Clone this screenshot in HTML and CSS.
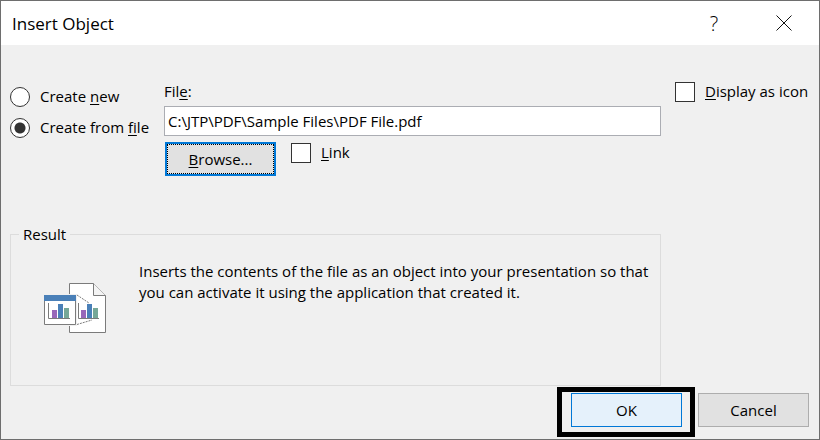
FILE: index.html
```html
<!DOCTYPE html>
<html lang="en">
<head>
  <meta charset="UTF-8">
  <meta name="viewport" content="width=device-width, initial-scale=1.0">
  <title>Insert Object</title>
  <link rel="stylesheet" href="styles.css">
</head>
<body>
  <form class="dialog">
    <header class="title-bar">
      <h1>Insert Object</h1>
      <button type="button" class="title-btn" aria-label="Help">?</button>
      <button type="button" class="title-btn" aria-label="Close">
        <svg width="16" height="16" viewBox="0 0 16 16" fill="none" stroke="#111">
          <path d="M.5 .5l15 15M15.5 .5l-15 15"/>
        </svg>
      </button>
    </header>

    <main class="content">
      <div class="source">
        <label class="option"><input type="radio" name="source"><span>Create <u>n</u>ew</span></label>
        <label class="option"><input type="radio" name="source" checked><span>Create from <u>f</u>ile</span></label>
      </div>

      <div class="file">
        <label for="file-path">Fil<u>e</u>:</label>
        <input type="text" id="file-path" value="C:\JTP\PDF\Sample Files\PDF File.pdf">
        <div class="file-actions">
          <button type="button" class="btn browse"><span><u>B</u>rowse...</span></button>
          <label class="check"><input type="checkbox"><span><u>L</u>ink</span></label>
        </div>
      </div>

      <label class="check"><input type="checkbox"><span><u>D</u>isplay as icon</span></label>

      <fieldset class="result">
        <legend>Result</legend>
        <div class="result-body">
          <svg class="result-icon" width="62" height="50" viewBox="0 0 62 50" aria-hidden="true">
            <!-- document -->
            <path d="M25.5 .5H49.5L61.5 12.5V49.5H25.5z" fill="#fff" stroke="#7b7b7b"/>
            <path d="M49.5 .5V12.5H61.5" fill="#f4f4f4" stroke="#7b7b7b"/>
            <path d="M34.5 20V35.5H55" fill="none" stroke="#7b7b7b"/>
            <path d="M37 27h5v8h-5z" fill="#9868b9"/>
            <path d="M43 21h5v14h-5z" fill="#4a80b8"/>
            <path d="M49 25h5v10h-5z" fill="#76a797"/>
            <path d="M33 12L45 20M33 41.5L48 37" stroke="#7b7b7b" stroke-dasharray="2 1"/>
            <!-- window -->
            <path d="M24 11H33V43H24z" fill="#f0f0f0"/>
            <path d="M.5 12.5H31.5V41.5H.5z" fill="#fff" stroke="#7b7b7b"/>
            <path d="M0 12h32v6H0z" fill="#4a80b8"/>
            <path d="M4.5 20V35.5H26" fill="none" stroke="#7b7b7b"/>
            <path d="M8 27h5v8H8z" fill="#9868b9"/>
            <path d="M14 21h5v14h-5z" fill="#4a80b8"/>
            <path d="M20 25h5v10h-5z" fill="#76a797"/>
          </svg>
          <p>Inserts the contents of the file as an object into your presentation so that you can activate it using the application that created it.</p>
        </div>
      </fieldset>
    </main>

    <footer class="actions">
      <div class="highlight">
        <button type="submit" class="btn ok">OK</button>
      </div>
      <button type="button" class="btn">Cancel</button>
    </footer>
  </form>
</body>
</html>
```
FILE: styles.css
```css
* {
  box-sizing: border-box;
}
body {
  margin: 0;
  font-family: "Open Sans", "Noto Sans", sans-serif;
  font-size: 15px;
  line-height: 21px;
  color: #000;
}
button, input {
  font: inherit;
  color: inherit;
  margin: 0;
}
u {
  text-underline-offset: 2px;
  text-decoration-thickness: 1px;
  text-decoration-skip-ink: none;
}
.dialog {
  display: flex;
  flex-direction: column;
  min-height: 100vh;
  background-color: #f0f0f0;
  border: 1px solid #6e6e6e;
}
.title-bar {
  display: flex;
  align-items: center;
  height: 44px;
  padding-left: 11px;
  background-color: #fff;
}
.title-bar h1 {
  flex: 1;
  margin: 0;
  font-size: 17px;
  font-weight: normal;
}
.title-btn {
  display: flex;
  align-items: center;
  justify-content: center;
  width: 70px;
  height: 44px;
  padding: 0;
  font-size: 20px;
  font-weight: 300;
  background: none;
  border: none;
}
.content {
  display: grid;
  grid-template-columns: 140px 1fr 134px;
  column-gap: 14px;
  row-gap: 48px;
  align-items: start;
  padding: 36px 10px 0 9px;
}
.option, .check {
  display: flex;
  align-items: center;
  gap: 10px;
  white-space: nowrap;
}
.option {
  height: 31px;
}
input[type="radio"], input[type="checkbox"] {
  appearance: none;
  flex: none;
  width: 20px;
  height: 20px;
  background-color: #fff;
  border: 1px solid #333;
}
input[type="radio"] {
  border-radius: 50%;
}
input[type="radio"]:checked {
  background-image: radial-gradient(circle, #333 5px, transparent 6px);
}
input[type="checkbox"]:checked {
  background-color: #333;
}
.file > label {
  display: block;
  margin-bottom: 4px;
}
.file input[type="text"] {
  display: block;
  width: 100%;
  height: 30px;
  padding: 0 3px;
  background-color: #fff;
  border: 1px solid #abadb3;
}
.file-actions {
  display: flex;
  align-items: flex-start;
  gap: 15px;
  padding: 6px 1px 0;
}
.btn {
  width: 111px;
  height: 34px;
  padding: 0;
  background-color: #e1e1e1;
  border: 1px solid #adadad;
}
.btn.browse {
  border: 2px solid #0078d7;
  outline: 1px dotted #000;
  outline-offset: -3px;
}
.btn.ok {
  display: block;
  background-color: #e5f1fb;
  border-color: #0078d7;
}
.result {
  grid-column: 1 / 3;
  min-width: 0;
  margin: 0;
  padding: 0 2px 0 8px;
  border: 1px solid #dcdcdc;
}
.result legend {
  padding: 0 4px;
}
.result-body {
  display: flex;
  gap: 33px;
  padding: 16px 0 52px 25px;
}
.result-icon {
  flex: none;
  margin-top: 22px;
}
.result p {
  margin: 0;
}
.actions {
  display: flex;
  justify-content: flex-end;
  gap: 3px;
  padding: 1px 10px 0;
}
.actions > .btn {
  margin-top: 6px;
}
.highlight {
  padding: 1px 8px 5px 9px;
  border: 5px solid #000;
}
```
